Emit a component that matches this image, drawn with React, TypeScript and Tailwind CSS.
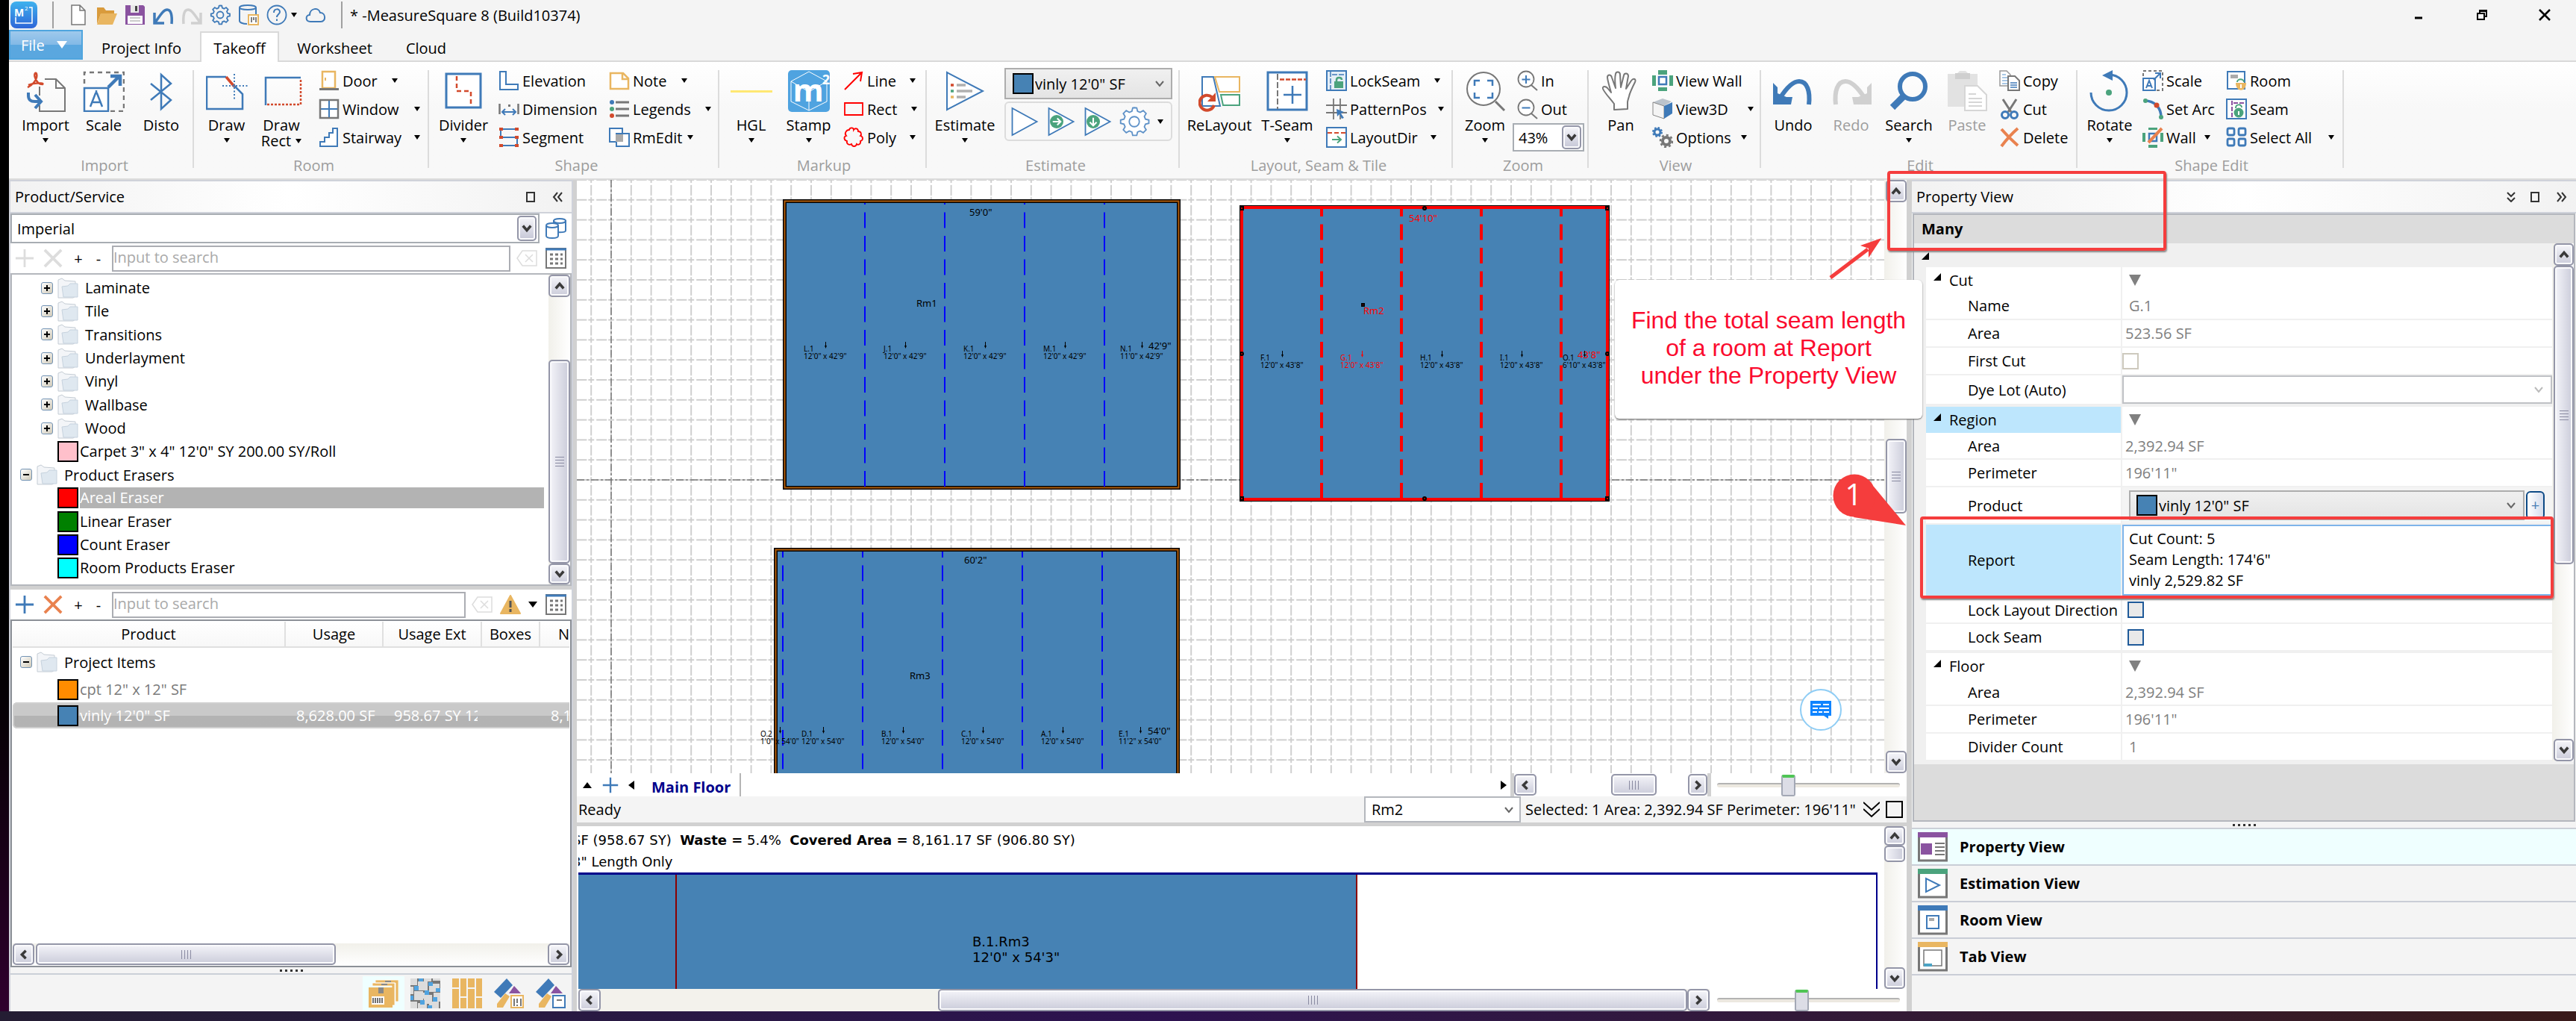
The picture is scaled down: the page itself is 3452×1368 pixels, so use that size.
import React, { useState } from 'react';
import clsx from 'clsx';
import { twMerge } from 'tailwind-merge';

const BLUE = '#3f7ab8';
const RED = '#d24a2c';
const GREEN = '#4ba37d';
const GOLD = '#e9b661';
const GREY = '#777777';
const PURPLE = '#8a53a0';

/* ---------- icons ---------- */

const page = 'M5 1h11l7 7v19H5z M16 1v7h7';
const gear =
  'M14 1.5l2.2.2.7 3 2.4 1 2.7-1.6 2.6 2.6-1.6 2.7 1 2.4 3 .7v3l-3 .7-1 2.4 1.6 2.7-2.6 2.6-2.7-1.6-2.4 1-.7 3h-3.6l-.7-3-2.4-1-2.7 1.6-2.6-2.6 1.6-2.7-1-2.4-3-.7v-3l3-.7 1-2.4-1.6-2.7 2.6-2.6 2.7 1.6 2.4-1 .7-3z';
const play = 'M3 2v24l22-12z';

const small: Record<string, React.ReactNode> = {
  newFile: <path d={page} fill="#fff" stroke={GREY} strokeWidth="1.5" />,
  open: (
    <>
      <path d="M1 4h9l3 4h11v5H6L1 26z" fill="#d99b3c" />
      <path d="M6 12h22l-6 15H1z" fill={GOLD} />
    </>
  ),
  save: (
    <>
      <path d="M1 1h24l2 2v24H1z" fill={PURPLE} />
      <path d="M8 1h11v10H8z" fill="#e8e8e8" />
      <path d="M14 2h3v7h-3z" fill="#444" />
      <path d="M4 15h20v11H4z" fill="#fff" />
      <path d="M7 18h14M7 22h14" stroke="#bbb" strokeWidth="1.5" />
    </>
  ),
  undo: <path d="M2 11v14h13M3 24C10 14 14 7 19 7c5 0 7 7 6 19" fill="none" stroke={BLUE} strokeWidth="3.5" />,
  redo: <path d="M26 11v14H13M25 24C18 14 14 7 9 7c-5 0-7 7-6 19" fill="none" stroke="#d0d0d0" strokeWidth="3.5" />,
  gear: (
    <>
      <path d={gear} fill="none" stroke={BLUE} strokeWidth="1.8" />
      <circle cx="14" cy="14" r="4.5" fill="none" stroke={BLUE} strokeWidth="1.8" />
    </>
  ),
  dbCard: (
    <>
      <path d="M2 4v18c0 2 4 4 10 4M24 4v9M2 4c0-4 22-4 22 0s-22 4-22 0" fill="none" stroke={BLUE} strokeWidth="2" />
      <path d="M14 14h13v13H14z" fill="#fff" stroke={GOLD} strokeWidth="2" />
      <path d="M18 17v7M21 17v4M24 17v7" stroke="#555" strokeWidth="1.5" />
    </>
  ),
  help: (
    <>
      <circle cx="14" cy="14" r="12.5" fill="none" stroke={BLUE} strokeWidth="1.8" />
      <path d="M10 11c0-6 8-6 8-1 0 3-4 3-4 7M14 19.5v2.5" fill="none" stroke={BLUE} strokeWidth="2" />
    </>
  ),
  cloud: <path d="M7 23c-7 0-7-9-1-9 0-9 12-11 14-3 8 0 8 12 1 12z" fill="none" stroke={BLUE} strokeWidth="2" />,
  door: (
    <>
      <path d="M5 2h17v22H5z" fill="#fff" stroke={GOLD} strokeWidth="2.5" />
      <path d="M9 10v4" stroke={GOLD} strokeWidth="2" />
      <path d="M1 25.5h26" stroke={GREY} strokeWidth="3" />
    </>
  ),
  window: (
    <>
      <path d="M2 2h24v24H2z" fill="#fff" stroke={GREY} strokeWidth="2.5" />
      <path d="M14 3v22M3 14h22" stroke={BLUE} strokeWidth="2" />
    </>
  ),
  stairway: <path d="M25 2v24H2v-6h6v-6h6V8h5V2z" fill="#fff" stroke={BLUE} strokeWidth="2" />,
  elevation: <path d="M2 2h8v17h16v7H2z" fill="#fff" stroke={BLUE} strokeWidth="2" />,
  dimension: (
    <>
      <path d="M1.5 7v14M26.5 7v14" stroke={GREY} strokeWidth="2.5" />
      <path d="M5 18h18M9 14l-4 4 4 4M19 14l4 4-4 4" fill="none" stroke={BLUE} strokeWidth="2" />
      <path d="M13 8h3v3h-3z" fill={GREY} />
    </>
  ),
  segment: (
    <>
      <path d="M25 3H3v11h22v11H3" fill="none" stroke={BLUE} strokeWidth="2" />
      <path d="M1 1h5v4H1zM22 1h5v4h-5zM1 12h5v4H1zM22 12h5v4h-5zM1 23h5v4H1zM22 23h5v4h-5z" fill={RED} />
    </>
  ),
  note: <path d="M2 4h17l7 7v14H2zM18 4v8h8" fill="#fff" stroke={GOLD} strokeWidth="2.5" />,
  legends: (
    <>
      <circle cx="4" cy="5" r="3" fill={BLUE} />
      <circle cx="4" cy="14" r="3" fill={GREEN} />
      <circle cx="4" cy="23" r="3" fill={RED} />
      <path d="M9 5h18M9 14h18M9 23h18" stroke={GREY} strokeWidth="3" />
    </>
  ),
  rmEdit: (
    <>
      <path d="M1 2h17v18H1z" fill="#fff" stroke={BLUE} strokeWidth="2" />
      <path d="M10 9h17v17H10z" fill="#fff" stroke={BLUE} strokeWidth="2" />
      <path d="M9 10h10v10H9z" fill="#aaa" />
    </>
  ),
  line: <path d="M2 26L25 3M13 5l12-2-2 12" fill="none" stroke="#f00" strokeWidth="2" />,
  rect: <path d="M2 6h24v16H2z" fill="none" stroke="#f00" strokeWidth="1.8" />,
  poly: (
    <path
      d="M8 4c1-4 6-3 6 0 2-3 6-2 6 2 4 0 5 4 3 6 4 1 4 6 0 7 1 4-3 6-5 4-1 4-6 4-7 0-3 2-7 0-6-4-4-1-5-6-1-7-3-3 0-8 4-8z"
      fill="none"
      stroke="#f00"
      strokeWidth="1.8"
    />
  ),
  lockSeam: (
    <>
      <path d="M1 1h26v26H1z" fill="#e4eef7" stroke={BLUE} strokeWidth="2" />
      <path d="M6 2v24M8 6h18" stroke={BLUE} strokeWidth="1.5" strokeDasharray="7 2" />
      <path d="M11 15h12v9H11z" fill={GREEN} />
      <path d="M14 15v-2c0-4 7-4 7 0" fill="none" stroke={GREEN} strokeWidth="2.5" />
    </>
  ),
  patternPos: (
    <>
      <path d="M10 0v28M19 0v28M0 9h28M0 19h28" stroke={GREY} strokeWidth="1.8" />
      <path d="M14 14l10 4-4 2 4 6-3 1-3-6-3 3z" fill={BLUE} />
    </>
  ),
  layoutDir: (
    <>
      <path d="M1 1h26v26H1z" fill="#fff" stroke={BLUE} strokeWidth="2" />
      <path d="M2 8h24" stroke={RED} strokeWidth="2" strokeDasharray="6 3" />
      <path d="M8 17h11M15 12.5l5 4.5-5 4.5" fill="none" stroke={GREEN} strokeWidth="2" />
    </>
  ),
  zoomIn: (
    <>
      <circle cx="12" cy="12" r="10.5" fill="#fff" stroke={GREY} strokeWidth="1.8" />
      <path d="M19 20l8 7" stroke={GREY} strokeWidth="2" />
      <path d="M12 7v11M6.5 12.5h11" stroke={BLUE} strokeWidth="2" />
    </>
  ),
  zoomOut: (
    <>
      <circle cx="12" cy="12" r="10.5" fill="#fff" stroke={GREY} strokeWidth="1.8" />
      <path d="M19 20l8 7" stroke={GREY} strokeWidth="2" />
      <path d="M6.5 12.5h11" stroke={BLUE} strokeWidth="2" />
    </>
  ),
  viewWall: (
    <>
      <path d="M8 0h12v6H8zM8 23h12v5H8zM0 7h5v14H0zM23 7h5v14h-5z" fill={GREEN} />
      <path d="M9 9h10v10H9z" fill="#fff" stroke={BLUE} strokeWidth="2.5" />
    </>
  ),
  view3d: (
    <>
      <path d="M1 5l13-5 12 4-10 6z" fill="#bcc4cc" />
      <path d="M1 5l15 5v17L1 22z" fill="#f4f4f4" stroke="#888" />
      <path d="M16 10l11-5v15l-11 7z" fill={BLUE} />
    </>
  ),
  options: (
    <>
      <circle cx="7" cy="7" r="4" fill="none" stroke={BLUE} strokeWidth="3" />
      <circle cx="7" cy="7" r="6" fill="none" stroke={BLUE} strokeWidth="2" strokeDasharray="2.5 2.2" />
      <circle cx="19" cy="19" r="5" fill="none" stroke={GREY} strokeWidth="4" />
      <circle cx="19" cy="19" r="8" fill="none" stroke={GREY} strokeWidth="2.5" strokeDasharray="3 3.2" />
    </>
  ),
  copy: (
    <>
      <path d="M1 1h9l5 5v15H1z" fill="#fff" stroke="#999" strokeWidth="1.5" />
      <path d="M4 6h5M4 10h7M4 14h7M4 18h7" stroke="#8db7de" strokeWidth="1.5" />
      <path d="M12 8h9l6 6v13H12z" fill="#fff" stroke={GREY} strokeWidth="2" />
      <path d="M15 17h9M15 20h9M15 23h9" stroke={BLUE} strokeWidth="1.5" />
    </>
  ),
  cut: (
    <>
      <path d="M5 1l11 17M23 1L12 18" stroke={GREY} strokeWidth="3" />
      <circle cx="8" cy="22" r="4.5" fill="none" stroke={BLUE} strokeWidth="3" />
      <circle cx="20" cy="22" r="4.5" fill="none" stroke={BLUE} strokeWidth="3" />
    </>
  ),
  del: <path d="M3 3c6 7 14 15 22 22M25 2C17 9 9 18 3 26" stroke="#e9824f" strokeWidth="4" fill="none" />,
  scaleSmall: (
    <>
      <path d="M1 8V1h26v26h-8" fill="none" stroke={GREY} strokeWidth="2" strokeDasharray="4 3" />
      <path d="M1 11h16v16H1z" fill="#fff" stroke={BLUE} strokeWidth="2" />
      <path d="M5 24l4-10 4 10M6 21h6M15 13l9-9M17 4h7v7" fill="none" stroke={BLUE} strokeWidth="2" />
    </>
  ),
  setArc: (
    <>
      <path d="M3 3c14 0 22 10 22 22" fill="none" stroke={BLUE} strokeWidth="3.5" />
      <circle cx="4" cy="3" r="3" fill={GREEN} />
      <circle cx="19" cy="9" r="3.5" fill={RED} />
      <circle cx="25" cy="25" r="3" fill={GREEN} />
    </>
  ),
  wall: (
    <>
      <path d="M8 1h12v3H8zM8 24h12v4H8zM0 8h4v12H0zM24 8h4v12h-4z" fill={GREEN} />
      <path d="M9 9h10v10H9z" fill="#fff" stroke={BLUE} strokeWidth="2.5" />
      <path d="M8 21L26 2" stroke="#e9824f" strokeWidth="4" />
    </>
  ),
  room: (
    <>
      <path d="M2 2h23v23H2z" fill="#fff" stroke={BLUE} strokeWidth="2" />
      <path d="M6 6h10v5H6z" fill="#aaa" />
      <path d="M15 16c0-5 9-5 9 0" fill="none" stroke={GREEN} strokeWidth="2" />
      <path d="M13 17h14c0 13-14 13-14 0z" fill={GOLD} />
      <path d="M20 19v5" stroke="#fff" strokeWidth="2" />
    </>
  ),
  seam: (
    <>
      <path d="M1 1h26v26H1z" fill="#fff" stroke={BLUE} strokeWidth="2" />
      <path d="M8 3v23M10 6h15" stroke={PURPLE} strokeWidth="2" strokeDasharray="6 2" />
      <circle cx="17" cy="19" r="6.5" fill={GREEN} />
      <path d="M13 13c0-6 8-6 8-1" fill="none" stroke={GREEN} strokeWidth="2" />
      <path d="M17 17v5" stroke="#fff" strokeWidth="2" />
    </>
  ),
  selectAll: (
    <g fill="#fff" stroke={BLUE} strokeWidth="2.8">
      <rect x="2" y="2" width="9" height="9" rx="2" />
      <rect x="17" y="2" width="9" height="9" rx="2" />
      <rect x="2" y="16" width="9" height="9" rx="2" />
      <rect x="17" y="16" width="9" height="9" rx="2" />
    </g>
  ),
  play: <path d={play} fill="#fff" stroke={BLUE} strokeWidth="1.2" />,
  playRight: (
    <>
      <path d={play} fill="#fff" stroke={BLUE} strokeWidth="1.2" />
      <circle cx="10" cy="14" r="6" fill={GREEN} />
      <path d="M6.5 14H13M10.5 11l3 3-3 3" fill="none" stroke="#fff" strokeWidth="1.4" />
    </>
  ),
  playDown: (
    <>
      <path d={play} fill="#fff" stroke={BLUE} strokeWidth="1.2" />
      <circle cx="10" cy="14" r="6" fill={GREEN} />
      <path d="M10 10.5V17M7 14.5l3 3 3-3" fill="none" stroke="#fff" strokeWidth="1.4" />
    </>
  ),
  gearLight: (
    <>
      <path d={gear} fill="#fff" stroke="#5f92c8" strokeWidth="1.2" />
      <circle cx="14" cy="14" r="4.5" fill="none" stroke="#5f92c8" strokeWidth="1.2" />
    </>
  ),
  databases: (
    <g fill="#fff" stroke={BLUE} strokeWidth="2">
      <path d="M11 3v14c0 3 16 3 16 0V3" />
      <ellipse cx="19" cy="4" rx="8" ry="3" />
      <path d="M1 10v14c0 4 16 4 16 0V10" />
      <ellipse cx="9" cy="10" rx="8" ry="3" />
    </g>
  ),
  plus: <path d="M14 1v26M1 14h26" stroke={BLUE} strokeWidth="3" />,
  plusOff: <path d="M14 1v26M1 14h26" stroke="#ddd" strokeWidth="3" />,
  cross: <path d="M2 2l24 24M26 2L2 26" stroke="#e9824f" strokeWidth="4" />,
  crossOff: <path d="M2 2l24 24M26 2L2 26" stroke="#ddd" strokeWidth="4" />,
  clear: (
    <>
      <path d="M1 14l7-10h19v20H8z" fill="#fff" stroke="#ddd" strokeWidth="1.5" />
      <path d="M12 9l10 10M22 9L12 19" stroke="#ddd" strokeWidth="1.5" />
    </>
  ),
  keypad: (
    <>
      <path d="M1 1h26v26H1z" fill="#fff" stroke={GREY} strokeWidth="2" />
      <path d="M0 2h28" stroke={BLUE} strokeWidth="3" />
      <path d="M6 9h17M6 15h17M6 21h17" stroke={GREY} strokeWidth="3" strokeDasharray="4 3" />
    </>
  ),
  warning: (
    <>
      <path d="M14 2l13 24H1z" fill={GOLD} stroke={GOLD} strokeWidth="2" strokeLinejoin="round" />
      <path d="M14 9v9M14 20v4" stroke="#555" strokeWidth="3" />
    </>
  ),
  folder: (
    <>
      <path d="M1 3l5-2 4 3 14 1v20l-3 2H1z" fill="#f3f5f8" stroke="#c4ccd4" />
      <path d="M6 12l8-1 3-3h10v18H8z" fill="#dfe8f0" stroke="#c6d2de" />
    </>
  ),
};

const large: Record<string, React.ReactNode> = {
  import: (
    <>
      <path d="M27 12h15l12 12v31H20v-8M20 22v12M42 12v12h12" fill="none" stroke={GREY} strokeWidth="2" />
      <path
        d="M4 23c7-3 14-12 12-18-1-3-4 0-2 5 2 6 6 9 10 9 3-2-10-3-19 1"
        fill="none"
        stroke={RED}
        strokeWidth="2.5"
      />
      <path d="M5 30v4c0 6 3 8 9 8h7M14 33l8 9-8 9" fill="none" stroke={BLUE} strokeWidth="4" />
    </>
  ),
  scale: (
    <>
      <path d="M2 18V3h53v52H36" fill="none" stroke={GREY} strokeWidth="2.5" strokeDasharray="6 5" />
      <path d="M2 24h32v31H2z" fill="#fff" stroke={BLUE} strokeWidth="2.5" />
      <path d="M10 49l7-18h2l7 18M12 43h12M18 27v4" fill="none" stroke={BLUE} strokeWidth="2.5" />
      <path d="M34 23l15-15M37 8h13v13" fill="none" stroke={BLUE} strokeWidth="4.5" />
    </>
  ),
  disto: <path d="M14 18l27 22-13 12V6l13 12-27 22" fill="none" stroke={BLUE} strokeWidth="2.5" />,
  draw: (
    <>
      <path d="M27 9H1v43h48V32L38 21" fill="none" stroke={BLUE} strokeWidth="2.5" />
      <path d="M27 9l11 13" stroke={RED} strokeWidth="3.5" />
      <path d="M38 5v34M22 21h34" stroke={BLUE} strokeWidth="2" strokeDasharray="2 2.5" />
    </>
  ),
  drawRect: (
    <>
      <path d="M7 47V10h47" fill="none" stroke={BLUE} strokeWidth="2.5" />
      <path d="M54 13v33H9" fill="none" stroke={RED} strokeWidth="2.5" strokeDasharray="3 2" />
    </>
  ),
  divider: (
    <>
      <path d="M5 5h46v45H5z" fill="#fff" stroke={BLUE} strokeWidth="3" />
      <path d="M19 8v20h19v21" fill="none" stroke={RED} strokeWidth="2.5" strokeDasharray="6 4" />
    </>
  ),
  hgl: <path d="M0 28.5h56" stroke="#ffe873" strokeWidth="3" />,
  stamp: (
    <>
      <rect width="56" height="56" rx="5" fill="#4fa3e0" />
      <path d="M28 2l24 13v27L28 54 4 42V15zM28 22v32M4 15l24 14 24-14" fill="none" stroke="#fff" />
      <text x="27" y="42" fontSize="42" fontWeight="bold" textAnchor="middle" fill="#fff">
        m
      </text>
      <text x="51" y="19" fontSize="18" fontWeight="bold" textAnchor="middle" fill="#fff">
        2
      </text>
    </>
  ),
  estimate: (
    <>
      <path d="M4 3v50l48-25z" fill="#fff" stroke={BLUE} strokeWidth="2" />
      <path d="M9 20h4" stroke={RED} strokeWidth="3.5" />
      <path d="M9 28h4" stroke={GREEN} strokeWidth="3.5" />
      <path d="M9 36h4" stroke={GOLD} strokeWidth="3.5" />
      <path d="M17 20h12M17 28h21M17 36h12" stroke="#b0b0b0" strokeWidth="3.5" />
    </>
  ),
  relayout: (
    <>
      <path d="M5 9h15l9 39H5z" fill="#fff" stroke={BLUE} strokeWidth="2" />
      <path d="M22 9h33v20H28z" fill="#fff" stroke={GOLD} strokeWidth="2" />
      <path d="M30 33h25v14H33z" fill="#fff" stroke={GREEN} strokeWidth="2" />
      <path d="M21 47a10 10 0 1 1-3-11" fill="none" stroke={RED} strokeWidth="4" />
      <path d="M23 30v12H12z" fill={RED} />
    </>
  ),
  tseam: (
    <>
      <path d="M2 3h52v50H2z" fill="#fff" stroke={BLUE} strokeWidth="3" />
      <path d="M15 5v47" stroke={GREY} strokeWidth="2" strokeDasharray="8 3" />
      <path d="M18 12.5h35" stroke={RED} strokeWidth="2.5" strokeDasharray="6 2" />
      <path d="M35 21v24M23 33h24" stroke={BLUE} strokeWidth="2.5" />
    </>
  ),
  zoom: (
    <>
      <circle cx="26" cy="25" r="22" fill="#fff" stroke={GREY} strokeWidth="2" />
      <path d="M42 42l12 12" stroke={GREY} strokeWidth="3" />
      <path d="M21 14h-7v7M31 14h7v7M14 30v7h7M38 30v7h-7" fill="none" stroke={BLUE} strokeWidth="2.5" />
    </>
  ),
  pan: (
    <path
      d="M19 53V45C12 36 6 30 4 25c-1-4 4-4 7 0l4 5C13 22 10 14 10 9c1-4 5-3 6 1l5 14C20 16 20 9 21 5c1-4 6-3 6 1l1 17 4-16c1-4 6-3 6 1-1 5-2 11-3 17l7-11c3-4 7-2 5 2-3 6-7 14-8 19-1 4-2 6-2 8v9z"
      fill="#fff"
      stroke={GREY}
      strokeWidth="2"
      strokeLinejoin="round"
    />
  ),
  undo: (
    <>
      <path d="M1 17l6 6v8L19 36h8l-2 10H1z" fill={BLUE} />
      <path d="M10 38C20 22 28 15 36 15c11 0 15 14 13 31" fill="none" stroke={BLUE} strokeWidth="6" />
    </>
  ),
  redo: (
    <>
      <path d="M55 17l-6 6v8l-12 5h-8l2 10h24z" fill="#d0d0d0" />
      <path d="M46 38C36 22 28 15 20 15 9 15 5 29 7 46" fill="none" stroke="#d0d0d0" strokeWidth="6" />
    </>
  ),
  search: (
    <>
      <circle cx="33" cy="22" r="17" fill="none" stroke={BLUE} strokeWidth="6" />
      <path d="M20 36L6 50" stroke={BLUE} strokeWidth="9" />
    </>
  ),
  paste: (
    <>
      <path d="M2 5h12l4-4h8l4 4h12v44H2z" fill="#e2e2e2" />
      <path d="M12 4h20v8H12z" fill="#cfcfcf" />
      <path d="M25 21h17l12 12v21H25z" fill="#fff" stroke="#d6d6d6" strokeWidth="2" />
      <path d="M30 32h10M30 38h18M30 43h18M30 48h18" stroke="#d6d6d6" strokeWidth="2" />
    </>
  ),
  rotate: (
    <>
      <path d="M3 30a24 24 0 1 0 24-24" fill="none" stroke={BLUE} strokeWidth="3" />
      <path d="M18 7l14-7v14z" fill={BLUE} />
      <circle cx="27" cy="30" r="4" fill={GREEN} />
    </>
  ),
};

function Small({ name, className }: { name: string; className?: string }) {
  return (
    <svg viewBox="0 0 28 28" className={twMerge('size-7 shrink-0', className)} aria-hidden="true">
      {small[name]}
    </svg>
  );
}

function Caret({ className }: { className?: string }) {
  return (
    <svg viewBox="0 0 8 6" className={clsx('h-[6px] w-2 shrink-0', className)} aria-hidden="true">
      <path d="M0 0h8L4 6z" />
    </svg>
  );
}

function Chevron({ dir = 'down' }: { dir?: string }) {
  const paths: Record<string, string> = {
    down: 'M2 4l6 7 6-7',
    up: 'M2 12l6-7 6 7',
    left: 'M11 2L5 8l6 6',
    right: 'M5 2l6 6-6 6',
  };
  return (
    <svg viewBox="0 0 16 16" className="size-[14px] shrink-0" aria-hidden="true">
      <path d={paths[dir]} fill="none" stroke="#3a3a3a" strokeWidth="4" />
    </svg>
  );
}

function ThinChevron({ color = '#666' }: { color?: string }) {
  return (
    <svg viewBox="0 0 12 10" className="h-[10px] w-3 shrink-0" aria-hidden="true">
      <path d="M1 2l5 6 5-6" fill="none" stroke={color} strokeWidth="2" />
    </svg>
  );
}

/* ---------- shared controls ---------- */

const knob = 'rounded-[5px] border-2 border-[#9496a8] shadow-[inset_0_0_0_2px_#fafafc]';

function ScrollButton({ dir, className }: { dir: string; className: string }) {
  return (
    <button
      aria-label={`Scroll ${dir}`}
      className={clsx(
        'flex shrink-0 items-center justify-center bg-linear-to-b from-[#f6f6fa] to-[#cbccda]',
        knob,
        className,
      )}
    >
      <Chevron dir={dir} />
    </button>
  );
}

function ComboKnob({ className }: { className: string }) {
  return (
    <span
      className={clsx(
        'flex w-[26px] shrink-0 items-center justify-center bg-linear-to-b from-[#f6f6fa] to-[#c5c6d6]',
        knob,
        className,
      )}
    >
      <Chevron />
    </span>
  );
}

function Thumb({ vertical = false, className }: { vertical?: boolean; className: string }) {
  return (
    <div
      className={clsx(
        'flex shrink-0 items-center justify-center from-[#f4f4f9] to-[#cbccda]',
        vertical ? 'bg-linear-to-r' : 'bg-linear-to-b',
        knob,
        className,
      )}
    >
      <div className={clsx('flex gap-[3px]', vertical && 'flex-col')}>
        {[0, 1, 2, 3].map((i) => (
          <i key={i} className={clsx('bg-[#8a8ba2]', vertical ? 'h-px w-3' : 'h-3 w-px')} />
        ))}
      </div>
    </div>
  );
}

function ZoomSlider({ label, value }: { label: string; value: number }) {
  return (
    <input
      type="range"
      aria-label={label}
      defaultValue={value}
      className="h-[29px] w-[245px] appearance-none bg-transparent [&::-webkit-slider-runnable-track]:h-[6px] [&::-webkit-slider-runnable-track]:rounded-sm [&::-webkit-slider-runnable-track]:border-t-2 [&::-webkit-slider-runnable-track]:border-[#b3b3b3] [&::-webkit-slider-runnable-track]:bg-[#ece8e0] [&::-webkit-slider-thumb]:-mt-[13px] [&::-webkit-slider-thumb]:h-[29px] [&::-webkit-slider-thumb]:w-[19px] [&::-webkit-slider-thumb]:appearance-none [&::-webkit-slider-thumb]:rounded-[3px] [&::-webkit-slider-thumb]:border-2 [&::-webkit-slider-thumb]:border-t-4 [&::-webkit-slider-thumb]:border-[#a3a8b5] [&::-webkit-slider-thumb]:border-t-[#4fc555] [&::-webkit-slider-thumb]:bg-[#dcdde6]"
    />
  );
}

function Swatch({ className }: { className: string }) {
  return <span className={clsx('size-7 shrink-0 border-2 border-black', className)} />;
}

/* ---------- title bar and tabs ---------- */

function TitleBar() {
  return (
    <header className="flex h-10 shrink-0 items-center">
      <svg viewBox="0 0 36 36" className="ml-[2px] size-9" aria-hidden="true">
        <defs>
          <linearGradient id="logo" x2="0" y2="1">
            <stop stopColor="#3fb2ee" />
            <stop offset="1" stopColor="#2e66d8" />
          </linearGradient>
        </defs>
        <rect width="36" height="36" rx="8" fill="url(#logo)" />
        <path d="M7 21v8h22V8h-4" fill="none" stroke="#fff" strokeWidth="1.5" />
        <text x="5" y="20" fontSize="14" fontWeight="bold" fill="#fff">
          M
        </text>
        <text x="19" y="12" fontSize="8" fill="#fff">
          2
        </text>
      </svg>
      <i className="ml-5 h-9 w-[2px] bg-[#a0a0a0]" />
      <div className="ml-[19px] flex gap-[10px]">
        {['newFile', 'open', 'save', 'undo', 'redo', 'gear', 'dbCard', 'help'].map((name) => (
          <button key={name} aria-label={name}>
            <Small name={name} />
          </button>
        ))}
      </div>
      <Caret className="ml-[5px]" />
      <button aria-label="cloud" className="ml-[11px]">
        <Small name="cloud" />
      </button>
      <i className="ml-5 h-9 w-[2px] bg-[#a0a0a0]" />
      <h1 className="ml-[10px]">* -MeasureSquare 8 (Build10374)</h1>
      <div className="mr-[34px] ml-auto flex items-center gap-[68px]">
        <button aria-label="Minimize">
          <svg viewBox="0 0 16 16" className="size-4">
            <path d="M2 12h10" stroke="#000" strokeWidth="3" />
          </svg>
        </button>
        <button aria-label="Restore">
          <svg viewBox="0 0 16 16" className="size-4" fill="none" stroke="#000" strokeWidth="2">
            <path d="M5 5V2h9v8h-3M2 6h9v8H2zM5 3h9" />
          </svg>
        </button>
        <button aria-label="Close">
          <svg viewBox="0 0 16 16" className="size-4">
            <path d="M1 1l14 14M15 1L1 15" stroke="#000" strokeWidth="2.5" />
          </svg>
        </button>
      </div>
    </header>
  );
}

function TabStrip() {
  const [active, setActive] = useState('Takeoff');
  const tabs = [
    ['Project Info', 'w-[157px]'],
    ['Takeoff', 'w-[106px]'],
    ['Worksheet', 'w-[149px]'],
    ['Cloud', 'w-[96px]'],
  ];
  return (
    <nav className="flex h-[43px] shrink-0 border-b-2 border-[#d9d9d9]">
      <button className="flex h-10 w-[99px] items-center gap-4 border-2 border-[#4fa5de] bg-linear-to-b from-[#9fc9ec] from-0% via-[#82b9e6] via-50% to-[#5aa7df] to-50% pl-[14px] text-white">
        File
        <svg viewBox="0 0 14 10" className="h-[10px] w-[14px]">
          <path d="M0 0h14L7 10z" fill="#fff" />
        </svg>
      </button>
      {tabs.map(([name, width]) => (
        <button
          key={name}
          onClick={() => setActive(name)}
          className={clsx(
            '-mb-[2px] mt-[2px] border-2 border-b-0 pt-[2px]',
            width,
            active === name ? 'border-[#d9d9d9] bg-white' : 'border-transparent',
          )}
        >
          {name}
        </button>
      ))}
    </nav>
  );
}

/* ---------- ribbon ---------- */

interface BigProps {
  icon: string;
  label: string;
  className: string;
  caret?: boolean;
  off?: boolean;
  second?: string;
}

function Big({ icon, label, className, caret, off, second }: BigProps) {
  return (
    <button className={clsx('flex shrink-0 flex-col items-center', off && 'text-[#9d9d9d]', className)}>
      <svg viewBox="0 0 56 56" className="size-14" aria-hidden="true">
        {large[icon]}
      </svg>
      <span className="mt-1 h-[23px] whitespace-nowrap">{label}</span>
      {second ? (
        <span className="flex items-center gap-[6px] leading-[23px]">
          {second}
          <Caret />
        </span>
      ) : (
        caret && <Caret className="mt-2" />
      )}
    </button>
  );
}

function Row({ icon, label, caret }: { icon: string; label: string; caret?: string }) {
  return (
    <button className={clsx('flex h-[38px] items-center gap-1 whitespace-nowrap', caret)}>
      <Small name={icon} />
      {label}
      {caret && <Caret className="ml-auto" />}
    </button>
  );
}

function Group({ title, className, children }: { title: string; className: string; children: React.ReactNode }) {
  return (
    <section className={clsx('flex shrink-0 flex-col border-r-2 border-[#dcdcdc]', className)}>
      <div className="flex h-[114px] shrink-0 items-start">{children}</div>
      <h2 className="text-center text-[#9d9d9d]">{title}</h2>
    </section>
  );
}

function Rows({ className, children }: { className?: string; children: React.ReactNode }) {
  return <div className={clsx('-mt-[5px] flex shrink-0 flex-col items-start', className)}>{children}</div>;
}

function Ribbon() {
  return (
    <div className="h-[158px] shrink-0 overflow-hidden border-b-2 border-[#dcdcdc] bg-linear-to-b from-white to-[#f8f8f8] to-40% pt-[11px]">
      <div className="flex h-[131px]">
        <Group title="Import" className="w-[248px] pl-[10px]">
          <Big icon="import" label="Import" caret className="w-[78px]" />
          <Big icon="scale" label="Scale" className="w-[78px]" />
          <Big icon="disto" label="Disto" className="w-[76px]" />
        </Group>
        <Group title="Room" className="w-[315px] pl-2">
          <Big icon="draw" label="Draw" caret className="w-[71px]" />
          <Big icon="drawRect" label="Draw" second="Rect" className="w-[76px]" />
          <Rows className="ml-3">
            <Row icon="door" label="Door" caret="w-[106px]" />
            <Row icon="window" label="Window" caret="w-[136px]" />
            <Row icon="stairway" label="Stairway" caret="w-[136px]" />
          </Rows>
        </Group>
        <Group title="Shape" className="w-[389px] pl-2">
          <Big icon="divider" label="Divider" caret className="w-[76px]" />
          <Rows className="ml-[9px] w-[148px]">
            <Row icon="elevation" label="Elevation" />
            <Row icon="dimension" label="Dimension" />
            <Row icon="segment" label="Segment" />
          </Rows>
          <Rows>
            <Row icon="note" label="Note" caret="w-[105px]" />
            <Row icon="legends" label="Legends" caret="w-[137px]" />
            <Row icon="rmEdit" label="RmEdit" caret="w-[113px]" />
          </Rows>
        </Group>
        <Group title="Markup" className="w-[278px] pl-1">
          <Big icon="hgl" label="HGL" caret className="w-[77px]" />
          <Big icon="stamp" label="Stamp" caret className="w-[77px]" />
          <Rows className="ml-2">
            <Row icon="line" label="Line" caret="w-[97px]" />
            <Row icon="rect" label="Rect" caret="w-[99px]" />
            <Row icon="poly" label="Poly" caret="w-[97px]" />
          </Rows>
        </Group>
        <Group title="Estimate" className="w-[339px] pl-2">
          <Big icon="estimate" label="Estimate" caret className="w-[86px]" />
          <div className="-mt-[3px] ml-[10px] flex w-[225px] flex-col gap-[3px]">
            <div className="flex h-[42px] items-center border-2 border-[#adadad] bg-linear-to-b from-[#f0f0f0] to-[#e4e4e4] px-[9px]">
              <Swatch className="bg-[#4682b4]" />
              <select aria-label="Estimate product" className="flex-1 appearance-none pl-[2px] outline-none">
                <option>vinly 12'0" SF</option>
              </select>
              <ThinChevron />
            </div>
            <div className="flex h-[53px] items-center gap-[7px] rounded-md border-2 border-[#dcdcdc] px-1">
              <Small name="play" className="size-[42px]" />
              <Small name="playRight" className="size-[42px]" />
              <Small name="playDown" className="size-[42px]" />
              <Small name="gearLight" className="size-[42px]" />
              <Caret className="ml-[3px]" />
            </div>
          </div>
        </Group>
        <Group title="Layout, Seam & Tile" className="w-[366px] pl-2">
          <Big icon="relayout" label="ReLayout" className="w-[90px]" />
          <Big icon="tseam" label="T-Seam" caret className="w-[92px]" />
          <Rows className="ml-[6px]">
            <Row icon="lockSeam" label="LockSeam" caret="w-[153px]" />
            <Row icon="patternPos" label="PatternPos" caret="w-[158px]" />
            <Row icon="layoutDir" label="LayoutDir" caret="w-[148px]" />
          </Rows>
        </Group>
        <Group title="Zoom" className="w-[182px] pl-2">
          <Big icon="zoom" label="Zoom" caret className="w-[70px]" />
          <Rows>
            <div className="ml-2">
              <Row icon="zoomIn" label="In" />
              <Row icon="zoomOut" label="Out" />
            </div>
            <div className="ml-[2px] flex h-[38px] w-[96px] items-center border-2 border-[#a8adb3] bg-white pr-[2px]">
              <select aria-label="Zoom level" className="w-0 flex-1 appearance-none pl-[6px] outline-none">
                <option>43%</option>
              </select>
              <ComboKnob className="h-8" />
            </div>
          </Rows>
        </Group>
        <Group title="View" className="w-[231px] pl-1">
          <Big icon="pan" label="Pan" className="w-[78px]" />
          <Rows className="ml-[3px]">
            <Row icon="viewWall" label="View Wall" />
            <Row icon="view3d" label="View3D" caret="w-[136px]" />
            <Row icon="options" label="Options" caret="w-[127px]" />
          </Rows>
        </Group>
        <Group title="Edit" className="w-[424px] pl-1">
          <Big icon="undo" label="Undo" className="w-[78px]" />
          <Big icon="redo" label="Redo" off className="w-[77px]" />
          <Big icon="search" label="Search" caret className="w-[78px]" />
          <Big icon="paste" label="Paste" off className="w-[78px]" />
          <Rows className="ml-1">
            <Row icon="copy" label="Copy" />
            <Row icon="cut" label="Cut" />
            <Row icon="del" label="Delete" />
          </Rows>
        </Group>
        <Group title="Shape Edit" className="w-[357px] pl-1">
          <Big icon="rotate" label="Rotate" caret className="w-[78px]" />
          <Rows className="ml-[5px] w-[112px]">
            <Row icon="scaleSmall" label="Scale" />
            <Row icon="setArc" label="Set Arc" />
            <Row icon="wall" label="Wall" caret="w-[91px]" />
          </Rows>
          <Rows>
            <Row icon="room" label="Room" />
            <Row icon="seam" label="Seam" />
            <Row icon="selectAll" label="Select All" caret="w-[145px]" />
          </Rows>
        </Group>
      </div>
    </div>
  );
}

/* ---------- left panel ---------- */

function Expander({ open }: { open?: boolean }) {
  return (
    <button
      aria-label={open ? 'Collapse' : 'Expand'}
      className="size-4 shrink-0 rounded-[3px] border border-[#7393b4] bg-linear-to-br from-white to-[#cfc9b8]"
    >
      <svg viewBox="0 0 14 14">
        <path d={open ? 'M3 7h8' : 'M3 7h8M7 3v8'} stroke="#000" strokeWidth="2" />
      </svg>
    </button>
  );
}

const folders = ['Laminate', 'Tile', 'Transitions', 'Underlayment', 'Vinyl', 'Wallbase', 'Wood'];

const erasers = [
  { name: 'Areal Eraser', color: 'bg-[#ff0000]' },
  { name: 'Linear Eraser', color: 'bg-[#008000] border-[#008000]' },
  { name: 'Count Eraser', color: 'bg-[#0000ff]' },
  { name: 'Room Products Eraser', color: 'bg-[#00ffff]' },
];

function SearchBar({ enabled = false }: { enabled?: boolean }) {
  return (
    <div className="flex h-10 shrink-0 items-center bg-white pr-[7px] pl-[6px]">
      <button aria-label="Add">
        <Small name={enabled ? 'plus' : 'plusOff'} className="size-[26px]" />
      </button>
      <button aria-label="Remove" className="ml-3">
        <Small name={enabled ? 'cross' : 'crossOff'} className="size-[26px]" />
      </button>
      <button className="ml-[15px] w-3">+</button>
      <button className="ml-[15px] w-3">-</button>
      <input
        aria-label="Search products"
        placeholder="Input to search"
        className="ml-3 h-[35px] w-0 flex-1 border-2 border-[#abadb3] pb-1 outline-none placeholder:text-[#a9a9a9]"
      />
      <Small name="clear" className="ml-2" />
      {enabled && (
        <>
          <Small name="warning" className="ml-[10px]" />
          <svg viewBox="0 0 12 8" className="ml-[10px] h-2 w-3">
            <path d="M0 0h12L6 8z" />
          </svg>
        </>
      )}
      <Small name="keypad" className="ml-[11px]" />
    </div>
  );
}

function ProductTree() {
  const [selected, setSelected] = useState('Areal Eraser');
  return (
    <div className="flex h-[419px] shrink-0 border-2 border-[#b4b7bd] bg-white">
      <ul className="flex flex-1 flex-col pt-[2px] pb-[6px] pl-[11px]">
        {folders.map((name) => (
          <li key={name} className="ml-7 flex flex-1 items-center">
            <Expander />
            <Small name="folder" className="mr-[9px] ml-[6px]" />
            {name}
          </li>
        ))}
        <li className="ml-[50px] flex flex-1 items-center gap-[2px]">
          <Swatch className="bg-[#ffc0cb]" />
          Carpet 3" x 4" 12'0" SY 200.00 SY/Roll
        </li>
        <li className="flex flex-1 items-center">
          <Expander open />
          <Small name="folder" className="mr-[9px] ml-[6px]" />
          Product Erasers
        </li>
        {erasers.map(({ name, color }) => (
          <li key={name} onClick={() => setSelected(name)} className="ml-[50px] flex flex-1 items-center gap-[2px]">
            <Swatch className={color} />
            <span className={clsx('mr-[6px] flex-1 leading-7', selected === name && 'bg-[#b3b3b3] text-white')}>
              {name}
            </span>
          </li>
        ))}
      </ul>
      <div className="flex w-[29px] flex-col bg-linear-to-r from-[#f1f0ea] to-white">
        <ScrollButton dir="up" className="h-[30px]" />
        <Thumb vertical className="mt-[84px] h-[273px]" />
        <ScrollButton dir="down" className="h-7" />
      </div>
    </div>
  );
}

function ProjectTable() {
  return (
    <div className="flex flex-1 flex-col overflow-hidden border-2 border-[#8c9097] bg-white p-[1px]">
      <table className="w-full table-fixed border-separate border-spacing-0">
        <colgroup>
          <col className="w-[366px]" />
          <col className="w-[131px]" />
          <col className="w-[132px]" />
          <col className="w-[78px]" />
          <col />
        </colgroup>
        <thead>
          <tr className="h-[35px] bg-linear-to-b from-white to-[#f7f7f7]">
            {['Product', 'Usage', 'Usage Ext', 'Boxes'].map((h) => (
              <th key={h} className="border-r-2 border-b-2 border-[#e0e0e0] font-normal">
                {h}
              </th>
            ))}
            <th className="overflow-hidden border-b-2 border-[#e0e0e0] pl-6 text-left font-normal">N</th>
          </tr>
        </thead>
        <tbody>
          <tr className="h-[38px]">
            <td colSpan={5}>
              <div className="flex items-center pl-[10px]">
                <Expander open />
                <Small name="folder" className="mr-[9px] ml-[6px]" />
                Project Items
              </div>
            </td>
          </tr>
          <tr className="h-[35px] text-[#7a7a7a]">
            <td colSpan={5}>
              <div className="flex items-center gap-[2px] pl-[60px]">
                <Swatch className="bg-[#ff8c00]" />
                cpt 12" x 12" SF
              </div>
            </td>
          </tr>
          <tr className="h-[35px] bg-linear-to-b from-[#c9c9c9] from-50% to-[#b3b3b3] to-50% text-white">
            <td className="rounded-l-md border-y-2 border-l-2 border-[#cfcfcf]">
              <div className="flex items-center gap-[2px] pl-[58px]">
                <Swatch className="bg-[#4682b4]" />
                vinly 12'0" SF
              </div>
            </td>
            <td className="overflow-hidden border-y-2 border-[#cfcfcf] pl-[14px] whitespace-nowrap">8,628.00 SF</td>
            <td className="border-y-2 border-[#cfcfcf] pl-[14px]">
              <div className="w-[112px] overflow-hidden whitespace-nowrap">958.67 SY 12</div>
            </td>
            <td className="border-y-2 border-[#cfcfcf]" />
            <td className="overflow-hidden border-y-2 border-[#cfcfcf] pl-[14px]">8,1</td>
          </tr>
        </tbody>
      </table>
      <div className="mt-auto flex h-[29px] shrink-0 gap-[2px] bg-linear-to-b from-[#f1f0ea] to-white">
        <ScrollButton dir="left" className="w-[29px]" />
        <Thumb className="w-[402px]" />
        <ScrollButton dir="right" className="ml-auto w-[29px]" />
      </div>
    </div>
  );
}

function Dots() {
  return (
    <div className="flex h-[10px] shrink-0 items-center justify-center gap-[4px] border-b-2 border-[#cbd0d8]">
      {[0, 1, 2, 3, 4].map((i) => (
        <i key={i} className="size-[3px] bg-[#333]" />
      ))}
    </div>
  );
}

function PanelTitle({ children, side }: { children: string; side: 'left' | 'right' }) {
  return (
    <div className="flex h-[45px] shrink-0 items-center border-t-2 border-b-2 border-[#cfd2da] bg-linear-to-r from-[#f2f2f2] via-white to-[#f2f2f2] pr-3 pl-[6px]">
      <h2>{children}</h2>
      <div className="ml-auto flex items-center gap-[18px]">
        {side === 'right' && (
          <svg viewBox="0 0 14 14" className="size-[14px]" fill="none" stroke="#333" strokeWidth="2">
            <path d="M2 1l5 5 5-5M2 8l5 5 5-5" />
          </svg>
        )}
        <svg viewBox="0 0 14 14" className="size-[14px]" fill="none" stroke="#333" strokeWidth="2">
          <path d="M2 1h10v12H2z" />
        </svg>
        <svg viewBox="0 0 14 14" className="ml-1 size-[14px]" fill="none" stroke="#333" strokeWidth="2">
          <path d={side === 'left' ? 'M7 1L2 7l5 6M13 1L8 7l5 6' : 'M1 1l5 6-5 6M7 1l5 6-5 6'} />
        </svg>
      </div>
    </div>
  );
}

function BottomIcons() {
  return (
    <div className="flex h-[49px] shrink-0 items-center justify-end">
      <button aria-label="Products" className="flex h-[46px] w-14 items-center justify-center bg-[#efffff]">
        <svg viewBox="0 0 40 40" className="size-10">
          <path d="M9 2h31v29h-4V6H9zM5 6h30v30h-4V10H5z" fill={GOLD} stroke="#fff" strokeWidth=".8" />
          <path d="M0 12h32v27H0z" fill={GOLD} />
          <path d="M13 12h7v8h-7zM22 3h8v2h-8zM17 7h8v2h-8z" fill="#888" />
          <path d="M4 24h17v11H4z" fill="#fff" />
          <path d="M6 26v7M9 26v7M12 26v7M15 26v7M18 26v7" stroke="#444" strokeWidth="1.5" />
        </svg>
      </button>
      <button aria-label="Tile patterns" className="flex w-14 justify-center">
        <svg viewBox="0 0 40 40" className="size-10">
          <path d="M0 0h40v40H0z" fill="#777" />
          <path
            d="M0 0h9v9H0zM18 0h10v4H18zM30 0h10v3H30zM10 4h13v12H10zM25 7h14v11H25zM0 11h4v10H0zM12 19h12v8h-12zM5 17h12v12H5zM18 22h11v12H18zM31 19h9v12h-9zM0 31h9v9H0zM10 33h12v7H10zM25 31h13v9H25z"
            fill="#dcdcdc"
          />
          <path d="M11 0h6v4h-6zM24 5h6v5h-6zM5 10h6v6H5zM19 16h6v6h-6zM34 13h6v5h-6zM0 23h4v6H0zM30 25h6v6h-6zM13 29h6v6h-6zM23 36h6v4h-6z" fill="#4fa3e0" />
        </svg>
      </button>
      <button aria-label="Plank patterns" className="flex w-14 justify-center">
        <svg viewBox="0 0 40 40" className="size-10">
          <path
            d="M0 0h9v12H0zM0 14h9v26H0zM11 0h8v24h-8zM11 26h8v14h-8zM21 0h9v12h-9zM21 14h9v26h-9zM32 0h8v24h-8zM32 26h8v14h-8z"
            fill={GOLD}
          />
        </svg>
      </button>
      {[GOLD, BLUE].map((color) => (
        <button key={color} aria-label="Samples" className="flex w-14 justify-center">
          <svg viewBox="0 0 40 40" className="size-10">
            <path d="M17 0l8 9L9 26 0 18z" fill={BLUE} />
            <path d="M27 10l9 10H20z" fill={PURPLE} />
            <path d="M15 20l6 4-9 15H4v-5z" fill={GOLD} />
            <path d="M23 23h16v16H23z" fill="#fff" stroke={color} strokeWidth="2" />
            <path
              d={color === GOLD ? 'M27 27v10M31 27v6M31 35v2M36 27v10' : 'M28 29h7'}
              stroke="#777"
              strokeWidth="2"
            />
          </svg>
        </button>
      ))}
    </div>
  );
}

function ProductPanel() {
  return (
    <aside className="flex w-[756px] shrink-0 flex-col border-x-2 border-[#cfd2da] bg-[#f4f4f4]">
      <PanelTitle side="left">Product/Service</PanelTitle>
      <div className="flex h-10 shrink-0 items-center bg-white">
        <div className="flex h-10 w-[709px] shrink-0 items-center border-2 border-[#a8adb3] px-[2px]">
          <select aria-label="Unit system" className="flex-1 appearance-none pl-[5px] outline-none">
            <option>Imperial</option>
          </select>
          <ComboKnob className="h-[34px]" />
        </div>
        <Small name="databases" className="ml-2" />
      </div>
      <SearchBar />
      <ProductTree />
      <i className="h-[5px] shrink-0 bg-[#d1d1d1]" />
      <SearchBar enabled />
      <ProjectTable />
      <Dots />
      <BottomIcons />
    </aside>
  );
}

/* ---------- drawing canvas ---------- */

interface Cut {
  name: string;
  size: string;
  x: number;
  arrow: number;
  red?: boolean;
}

// one grid cell is 3 ft on the plan
const CELL = 26.8;

function CutLabels({ cuts, y }: { cuts: Cut[]; y: number }) {
  return (
    <>
      {cuts.map((c) => (
        <g key={c.name} fill={c.red ? '#ff0000' : '#000'} fontSize="10">
          <path d={`M${c.arrow} ${y - 13}h1v5h1l-1.5 4-1.5-4h1z`} />
          <text x={c.x} y={y}>
            {c.name}
          </text>
          <text x={c.x} y={y + 10}>
            {c.size}
          </text>
        </g>
      ))}
    </>
  );
}

interface SeamsProps {
  xs: number[];
  top: number;
  bottom: number;
  color: string;
  width: number;
}

function Seams({ xs, top, bottom, color, width }: SeamsProps) {
  return (
    <>
      {xs.map((x) => (
        <path key={x} d={`M${x} ${bottom}V${top}`} stroke={color} strokeWidth={width} strokeDasharray="21 10.5" />
      ))}
    </>
  );
}

function Walls({ x, y, w, h }: { x: number; y: number; w: number; h: number }) {
  return (
    <>
      <rect x={x + 2.5} y={y + 2.5} width={w - 5} height={h - 5} fill="#4682b4" stroke="#000" strokeWidth="5" />
      <rect x={x + 2.5} y={y + 2.5} width={w - 5} height={h - 5} fill="none" stroke="#b05c08" strokeWidth="2" />
    </>
  );
}

const rm1: Cut[] = [
  { name: 'L.1', size: '12\'0" x 42\'9"', x: 304, arrow: 333 },
  { name: 'J.1', size: '12\'0" x 42\'9"', x: 411, arrow: 440 },
  { name: 'K.1', size: '12\'0" x 42\'9"', x: 518, arrow: 547 },
  { name: 'M.1', size: '12\'0" x 42\'9"', x: 625, arrow: 654 },
  { name: 'N.1', size: '11\'0" x 42\'9"', x: 728, arrow: 757 },
];

const rm2: Cut[] = [
  { name: 'F.1', size: '12\'0" x 43\'8"', x: 916, arrow: 945 },
  { name: 'G.1', size: '12\'0" x 43\'8"', x: 1023, arrow: 1052, red: true },
  { name: 'H.1', size: '12\'0" x 43\'8"', x: 1130, arrow: 1159 },
  { name: 'I.1', size: '12\'0" x 43\'8"', x: 1237, arrow: 1266 },
  { name: 'O.1', size: '6\'10" x 43\'8"', x: 1321, arrow: 1350 },
];

const rm3: Cut[] = [
  { name: 'O.2', size: '1\'0" x 54\'0"', x: 246, arrow: 272 },
  { name: 'D.1', size: '12\'0" x 54\'0"', x: 301, arrow: 330 },
  { name: 'B.1', size: '12\'0" x 54\'0"', x: 408, arrow: 437 },
  { name: 'C.1', size: '12\'0" x 54\'0"', x: 515, arrow: 544 },
  { name: 'A.1', size: '12\'0" x 54\'0"', x: 622, arrow: 651 },
  { name: 'E.1', size: '11\'2" x 54\'0"', x: 726, arrow: 755 },
];

function FloorPlan() {
  return (
    <svg className="h-full w-full bg-white font-['Noto_Sans',sans-serif]" fontSize="13">
      <defs>
        <pattern id="grid" x="45" y="401" width={CELL} height={CELL} patternUnits="userSpaceOnUse">
          <path d="M1 0v5M1 8v14M1 24v3M0 1h5M8 1h14M24 1h3" stroke="#cfcfcf" strokeWidth="2" />
        </pattern>
      </defs>
      <rect width="100%" height="100%" fill="url(#grid)" />
      <path d="M46 0V2000M0 402H4000" stroke="#777" strokeWidth="1.5" strokeDasharray="10 3 3 3" />

      <Walls x={276} y={26} w={533} h={389} />
      <Seams xs={[386, 493, 600, 707]} top={31} bottom={411} color="#0000ff" width={2} />
      <text x="526" y="48">59'0"</text>
      <text x="455" y="170">Rm1</text>
      <text x="766" y="227">42'9"</text>
      <CutLabels cuts={rm1} y={230} />

      <rect x="888.5" y="34.5" width="495" height="396" fill="#4682b4" stroke="#000" />
      <rect x="891" y="37" width="490" height="391" fill="none" stroke="#ff0000" strokeWidth="4" />
      <Seams xs={[998, 1105, 1212, 1319]} top={39} bottom={427} color="#ff0000" width={4} />
      <g fill="#ff0000">
        <text x="1115" y="56">54'10"</text>
        <text x="1054" y="180">Rm2</text>
        <text x="1341" y="239">43'8"</text>
      </g>
      <g fill="#c00000" stroke="#000" strokeWidth="2">
        <path d="M889 36h4v4h-4zM1379 36h4v4h-4zM889 425h4v4h-4zM1379 425h4v4h-4zM1052 166h3v3h-3z" />
        <circle cx="1136" cy="38" r="2" />
        <circle cx="1136" cy="427" r="2" />
        <circle cx="891" cy="233" r="2" />
        <circle cx="1381" cy="233" r="2" />
      </g>
      <CutLabels cuts={rm2} y={242} />

      <Walls x={264} y={493} w={544} h={480} />
      <Seams xs={[276, 383, 490, 597, 704]} top={498} bottom={821} color="#0000ff" width={2} />
      <text x="519" y="514">60'2"</text>
      <text x="446" y="669">Rm3</text>
      <text x="765" y="743">54'0"</text>
      <CutLabels cuts={rm3} y={746} />
    </svg>
  );
}

function Workspace() {
  return (
    <main className="flex min-w-0 flex-1 flex-col bg-white">
      <div className="flex min-h-0 flex-1">
        <div className="relative min-w-0 flex-1">
          <FloorPlan />
          <button
            aria-label="Chat"
            className="absolute right-[57px] bottom-[57px] flex size-14 items-center justify-center rounded-full border-2 border-[#8fcdf5] bg-white"
          >
            <svg viewBox="0 0 28 24" className="h-6 w-7">
              <path d="M0 0h28v20h-4v4l-6-4H0z" fill="#1084ff" />
              <path d="M3 5h11M17 5h8M3 10h7M12 10h13M3 15h6M11 15h5M18 15h7" stroke="#fff" strokeWidth="2" />
            </svg>
          </button>
        </div>
        <div className="flex w-[30px] flex-col bg-linear-to-r from-[#f1f0ea] to-white pl-[2px]">
          <ScrollButton dir="up" className="h-[30px]" />
          <Thumb vertical className="mt-[317px] h-[100px]" />
          <ScrollButton dir="down" className="mt-auto h-[30px]" />
        </div>
      </div>

      <div className="flex h-[31px] shrink-0 items-center">
        <svg viewBox="0 0 12 8" className="ml-2 h-2 w-3">
          <path d="M0 8h12L6 0z" />
        </svg>
        <button aria-label="Add floor" className="ml-[14px]">
          <Small name="plus" className="size-[22px]" />
        </button>
        <svg viewBox="0 0 8 12" className="ml-[13px] h-3 w-2">
          <path d="M8 0v12L0 6z" />
        </svg>
        <button className="ml-[23px] h-full border-r-2 border-[#b5b5b5] pt-[6px] pr-3 font-bold leading-6 text-[#00008b]">
          Main Floor
        </button>
        <svg viewBox="0 0 8 12" className="mr-[5px] ml-auto h-3 w-2">
          <path d="M0 0v12l8-6z" />
        </svg>
        <i className="h-full w-[5px] bg-[#d1d1d1]" />
        <ScrollButton dir="left" className="h-[29px] w-[30px]" />
        <Thumb className="ml-[100px] h-[29px] w-[61px]" />
        <ScrollButton dir="right" className="ml-[42px] h-[29px] w-[26px]" />
        <i className="mr-2 h-full w-[5px] bg-[#d1d1d1]" />
        <ZoomSlider label="Plan zoom" value={38} />
        <i className="w-[9px]" />
      </div>

      <div className="flex h-[35px] shrink-0 items-center bg-[#f4f4f4] pl-[2px]">
        Ready
        <div className="ml-auto flex h-[35px] w-[210px] items-center border-2 border-[#b4b7bd] bg-white px-2">
          <select aria-label="Room" className="flex-1 appearance-none outline-none">
            <option>Rm2</option>
          </select>
          <ThinChevron />
        </div>
        <span className="ml-[6px] w-[453px] whitespace-nowrap">Selected: 1 Area: 2,392.94 SF Perimeter: 196'11"</span>
        <svg viewBox="0 0 22 22" className="size-[22px]" fill="none" stroke="#000" strokeWidth="2">
          <path d="M0 1l11 10L22 1M0 10l11 10 11-10" />
        </svg>
        <svg viewBox="0 0 24 24" className="mr-1 ml-2 size-6" fill="none" stroke="#000" strokeWidth="2">
          <path d="M1 1h21v21H1z" />
        </svg>
      </div>
      <i className="h-[5px] shrink-0 bg-[#d1d1d1]" />

      <div className="flex h-[218px] shrink-0 font-['DejaVu_Sans',sans-serif] text-[18px]">
        <div className="flex min-w-0 flex-1 flex-col overflow-hidden pl-[2px]">
          <div className="overflow-hidden pt-1">
            <p className="-ml-2 leading-[29px] whitespace-pre">
              SF (958.67 SY){'  '}
              <b>Waste =</b> 5.4%{'  '}
              <b>Covered Area =</b> 8,161.17 SF (906.80 SY)
            </p>
            <p className="-ml-2 leading-[29px]">3" Length Only</p>
          </div>
          <div className="mr-[9px] flex flex-1 border-t-[3px] border-r-2 border-[#00008b]">
            <div className="w-[132px] border-r-2 border-[#8b0000] bg-[#4682b4]" />
            <div className="flex w-[912px] items-center justify-center border-r-2 border-[#8b0000] bg-[#4682b4] pt-[46px]">
              <p className="w-[118px] leading-[21px] whitespace-nowrap">
                B.1.Rm3
                <br />
                12'0" x 54'3"
              </p>
            </div>
          </div>
        </div>
        <div className="flex w-[30px] flex-col bg-linear-to-r from-[#f1f0ea] to-white pr-[2px]">
          <ScrollButton dir="up" className="h-[26px]" />
          <div className={clsx('h-[22px] bg-linear-to-r from-[#f4f4f9] to-[#cbccda]', knob)} />
          <ScrollButton dir="down" className="mt-auto h-[29px]" />
        </div>
      </div>
      <div className="flex h-[30px] shrink-0 items-center pl-[2px]">
        <div className="flex h-full flex-1 bg-[#f3f2ec]">
          <ScrollButton dir="left" className="w-[30px]" />
          <Thumb className="ml-auto w-[1004px]" />
          <ScrollButton dir="right" className="w-[30px]" />
        </div>
        <i className="w-[10px]" />
        <ZoomSlider label="Layout zoom" value={46} />
        <i className="w-[9px]" />
      </div>
    </main>
  );
}

/* ---------- right panel ---------- */

interface PropProps {
  label: string;
  className?: string;
  heading?: boolean;
  active?: boolean;
  htmlFor?: string;
  children?: React.ReactNode;
}

function Prop({ label, className = 'h-[37px]', heading, active, htmlFor, children }: PropProps) {
  return (
    <div className={clsx('flex shrink-0 gap-[2px] border-[#f0f0f0]', !heading && 'border-b-2', className)}>
      <label
        htmlFor={htmlFor}
        className={clsx(
          'flex w-[261px] shrink-0 items-center whitespace-nowrap',
          heading ? 'gap-[11px] pl-[10px]' : 'pl-14',
          active ? 'bg-[#bde6fd]' : 'bg-white',
        )}
      >
        {heading && (
          <svg viewBox="0 0 10 10" className="mb-2 size-[10px]">
            <path d="M10 0v10H0z" />
          </svg>
        )}
        {label}
      </label>
      <div className="flex flex-1 items-center bg-white text-[#7f7f7f]">
        {heading ? (
          <svg viewBox="0 0 16 15" className="ml-[9px] h-[15px] w-4">
            <path d="M0 0h16L8 15z" fill="#808080" />
          </svg>
        ) : (
          children
        )}
      </div>
    </div>
  );
}

const box = 'size-[22px] appearance-none border-2';

function PropertyGrid() {
  return (
    <div className="flex shrink-0 bg-[#f0f0f0] pb-1">
      <div className="flex flex-1 flex-col pl-4">
        <svg viewBox="0 0 10 10" className="mt-3 mb-[10px] -ml-[6px] size-[10px]">
          <path d="M10 0v10H0z" />
        </svg>
        <Prop heading label="Cut" className="h-[34px]" />
        <Prop label="Name">
          <span className="pl-[9px]">G.1</span>
        </Prop>
        <Prop label="Area">
          <span className="pl-1">523.56 SF</span>
        </Prop>
        <Prop label="First Cut" htmlFor="first-cut">
          <input id="first-cut" type="checkbox" disabled className={clsx(box, 'border-[#cdc9bd]')} />
        </Prop>
        <Prop label="Dye Lot (Auto)" htmlFor="dye-lot" className="h-[42px] border-b-4">
          <div className="flex h-full w-full items-center border-2 border-[#bfc1c5] pr-[10px]">
            <select id="dye-lot" className="h-full flex-1 appearance-none outline-none">
              <option></option>
            </select>
            <ThinChevron color="#bbb" />
          </div>
        </Prop>
        <Prop heading active label="Region" className="h-[35px]" />
        <Prop label="Area" className="h-[36px]">
          <span className="pl-1">2,392.94 SF</span>
        </Prop>
        <Prop label="Perimeter">
          <span className="pl-1">196'11"</span>
        </Prop>
        <Prop label="Product" htmlFor="product" className="h-[50px]">
          <div className="flex h-full w-full items-center gap-[2px] bg-[#f4f4f4] pr-[10px] pl-[9px]">
            <div className="flex h-10 flex-1 items-center border-2 border-[#adadad] bg-linear-to-b from-[#f0f0f0] to-[#e4e4e4] pr-[10px] pl-2">
              <Swatch className="bg-[#4682b4]" />
              <select id="product" className="flex-1 appearance-none pl-[2px] text-black outline-none">
                <option>vinly 12'0" SF</option>
              </select>
              <ThinChevron />
            </div>
            <button className="h-[38px] w-[25px] rounded-md border-2 border-[#0d4a86] bg-linear-to-r from-white to-[#d5dcec] leading-none text-[#4b7fb5]">
              +
            </button>
          </div>
        </Prop>
        <Prop active label="Report" htmlFor="report" className="h-[97px]">
          <textarea
            id="report"
            readOnly
            rows={3}
            value={'Cut Count: 5\nSeam Length: 174\'6"\nvinly 2,529.82 SF'}
            className="h-full w-full resize-none overflow-hidden border-2 border-[#7eb4ea] py-[3px] pl-[7px] leading-7 text-black outline-none"
          />
        </Prop>
        <Prop label="Lock Layout Direction" htmlFor="lock-layout" className="h-[36px]">
          <input id="lock-layout" type="checkbox" className={clsx(box, 'ml-[7px] border-[#1f5a99] bg-[#e9e9e9]')} />
        </Prop>
        <Prop label="Lock Seam" htmlFor="lock-seam" className="h-[39px] border-b-4">
          <input id="lock-seam" type="checkbox" className={clsx(box, 'ml-[7px] border-[#1f5a99] bg-[#e9e9e9]')} />
        </Prop>
        <Prop heading label="Floor" className="h-[35px]" />
        <Prop label="Area" className="h-[36px]">
          <span className="pl-1">2,392.94 SF</span>
        </Prop>
        <Prop label="Perimeter">
          <span className="pl-1">196'11"</span>
        </Prop>
        <Prop label="Divider Count">
          <span className="pl-[9px]">1</span>
        </Prop>
      </div>
      <div className="flex w-[29px] flex-col bg-linear-to-r from-[#f1f0ea] to-white pl-[2px]">
        <ScrollButton dir="up" className="h-[30px]" />
        <Thumb vertical className="h-[400px]" />
        <ScrollButton dir="down" className="mt-auto h-[30px]" />
      </div>
    </div>
  );
}

const views = [
  {
    name: 'Property View',
    color: PURPLE,
    art: (
      <>
        <path d="M4 15h15v15H4z" fill={PURPLE} />
        <path d="M23 15h13M23 20h13M23 25h13M23 30h13" stroke={GREY} strokeWidth="2" />
      </>
    ),
  },
  { name: 'Estimation View', color: GREEN, art: <path d="M11 13v18l18-9z" fill="none" stroke={BLUE} strokeWidth="2" /> },
  {
    name: 'Room View',
    color: BLUE,
    art: (
      <>
        <path d="M12 14h16v17H12z" fill="none" stroke={BLUE} strokeWidth="2" />
        <path d="M15 17h7v4h-7z" fill="#aaa" />
      </>
    ),
  },
  {
    name: 'Tab View',
    color: GOLD,
    art: (
      <>
        <path d="M8 11h24v21H8z" fill="none" stroke="#777" strokeWidth="1.5" />
        <path d="M8 29h11v4H8z" fill="#4ba3c4" />
      </>
    ),
  },
];

/* Markup drawn over the panel: two frames, an arrow, a note and a numbered pin */
function Annotations() {
  const frame = 'pointer-events-none absolute rounded-[4px] border-4 border-[#f53d3d] shadow-[1px_2px_2px_#888]';
  return (
    <>
      <div className={clsx(frame, '-top-3 -left-[33px] h-[107px] w-[374px]')} />
      <div className={clsx(frame, 'top-[451px] left-[11px] h-[110px] w-[849px]')} />
      <div className="absolute top-[134px] -left-[398px] flex h-[186px] w-[412px] items-center justify-center rounded-md bg-white pb-[3px] text-center font-['Liberation_Sans',Arial,sans-serif] text-[32px] leading-[37px] text-[#fb0a2e] shadow-[0_1px_2px_#666]">
        <p>
          Find the total seam length
          <br />
          of a room at Report
          <br />
          under the Property View
        </p>
      </div>
      <svg viewBox="0 0 72 58" className="absolute top-[77px] -left-[113px] h-[58px] w-[72px]">
        <path d="M4 54L54 16" stroke="#f53d3d" strokeWidth="5" />
        <path d="M70 3L47 11l9 3 0 10z" fill="#f53d3d" stroke="#f53d3d" strokeWidth="2" />
      </svg>
      <svg viewBox="0 0 100 72" className="absolute top-[393px] -left-[106px] h-[72px] w-[100px]">
        <path d="M55 18L98 70 28 59z" fill="#f53d3d" />
        <circle cx="29" cy="30" r="28.5" fill="#f53d3d" />
        <text x="28" y="43" fontSize="40" fill="#fff" textAnchor="middle">
          1
        </text>
      </svg>
    </>
  );
}

function PropertyPanel() {
  const [view, setView] = useState('Property View');
  return (
    <aside className="relative flex w-[890px] shrink-0 flex-col bg-[#f4f4f4]">
      <PanelTitle side="right">Property View</PanelTitle>
      <div className="mx-px flex flex-1 flex-col border-2 border-[#b4b7bd] bg-[#dcdcdc]">
        <h3 className="h-[38px] shrink-0 pl-[10px] leading-[38px] font-bold">Many</h3>
        <PropertyGrid />
      </div>
      <Dots />
      {views.map(({ name, color, art }) => (
        <button
          key={name}
          onClick={() => setView(name)}
          className={clsx(
            'flex h-[49px] shrink-0 items-center gap-4 border-b-2 border-[#c9cdd6] pl-2 font-bold',
            view === name && 'bg-[#efffff]',
          )}
        >
          <svg viewBox="0 0 40 40" className="size-10">
            <path d="M1.5 2h37v36h-37z" fill="#fff" stroke={GREY} strokeWidth="3" />
            <path d="M0 0h40v7H0z" fill={color} />
            {art}
          </svg>
          {name}
        </button>
      ))}
      <div className="h-[48px] shrink-0" />
      <Annotations />
    </aside>
  );
}

export default function App() {
  return (
    <div className="flex h-screen flex-col overflow-hidden bg-linear-to-r from-[#241d33] via-[#2d1250] via-45% to-[#3a1a1a] font-['Open_Sans','Noto_Sans',sans-serif] text-[20px] leading-[27px] text-black">
      <div className="flex min-h-0 flex-1 bg-[#f4f4f4]">
        <i className="w-3 shrink-0 bg-linear-to-b from-black via-black to-[#30002e]" />
        <div className="flex min-w-0 flex-1 flex-col">
          <TitleBar />
          <TabStrip />
          <Ribbon />
          <div className="flex min-h-0 flex-1">
            <ProductPanel />
            <i className="w-[5px] shrink-0 bg-[#d1d1d1]" />
            <Workspace />
            <i className="w-[7px] shrink-0 bg-[#d1d1d1]" />
            <PropertyPanel />
          </div>
        </div>
      </div>
      <footer className="h-[13px] shrink-0" />
    </div>
  );
}
